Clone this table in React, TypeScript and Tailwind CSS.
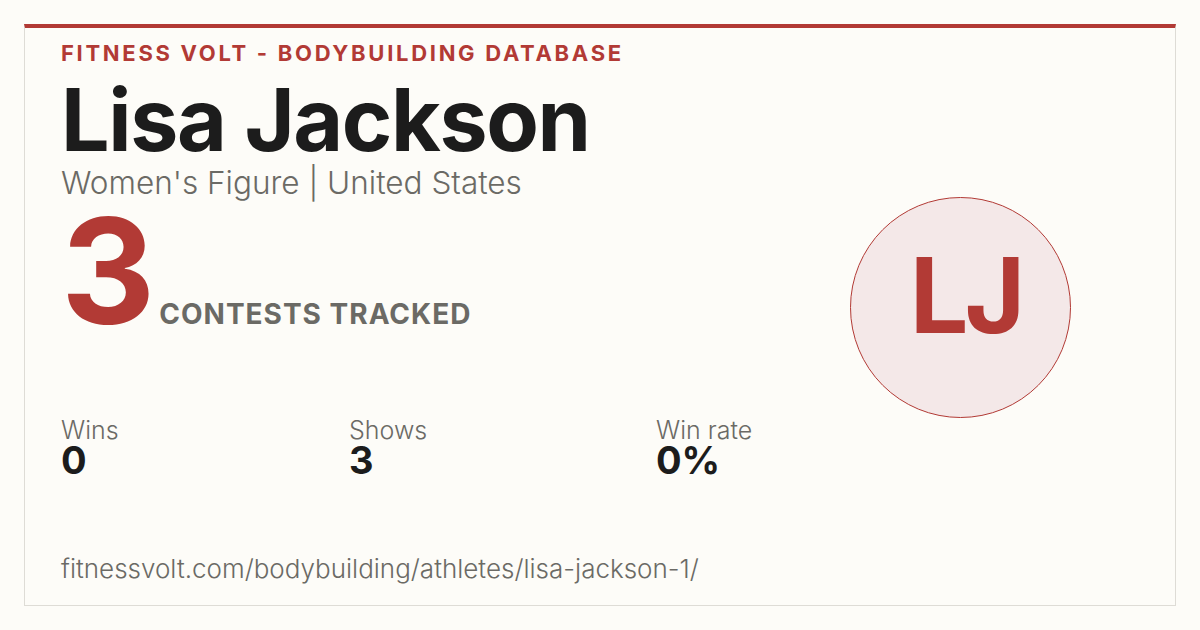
const stats = [
  { label: 'Wins', value: '0' },
  { label: 'Shows', value: '3' },
  { label: 'Win rate', value: '0%' },
];

export default function App() {
  return (
    <div
      className="h-[630px] w-[1200px] bg-[#fdfcf8] p-6"
      style={{ fontFamily: 'Inter, "Noto Sans", sans-serif' }}
    >
      <div className="flex h-[582px] border border-t-4 border-[#dedcd6] border-t-[#b23a35] bg-[#fdfcf8]">
        <div className="flex flex-1 flex-col pl-[36px] pt-[10px]">
          <div className="text-[22px] font-bold leading-[30px] tracking-[2.7px] text-[#b23a35]">
            FITNESS VOLT - BODYBUILDING DATABASE
          </div>
          <div className="mt-[8px] text-[86px] font-bold leading-[88px] tracking-[-1.4px] text-[#1c1c1c]">
            Lisa Jackson
          </div>
          <div className="text-[31.5px] font-light leading-[38px] text-[#6b6a65]">
            Women's Figure | United States
          </div>
          <div className="mt-[9px] flex items-baseline gap-[6px]">
            <div className="text-[146px] font-bold leading-[120px] tracking-[-2px] text-[#b23a35]">3</div>
            <div className="text-[28px] font-bold leading-[34px] tracking-[1px] text-[#6b6a65]">
              CONTESTS TRACKED
            </div>
          </div>
          <div className="mt-[85px] grid grid-cols-[288px_307px_auto]">
            {stats.map((s) => (
              <div key={s.label} className="flex flex-col">
                <span className="text-[25px] font-light leading-[28px] text-[#6b6a65]">{s.label}</span>
                <span className="text-[38px] font-bold leading-[33px] text-[#1c1c1c]">{s.value}</span>
              </div>
            ))}
          </div>
          <div className="mt-auto mb-[20px] text-[26px] font-light leading-[32px] text-[#6b6a65]">
            fitnessvolt.com/bodybuilding/athletes/lisa-jackson-1/
          </div>
        </div>
        <div className="flex w-[325px] items-start justify-start pt-[169px]">
          <div className="flex h-[221px] w-[221px] items-center justify-center rounded-full border-[1.5px] border-[#b23a35] bg-[#f4e8e8]">
            <span className="-mt-[26px] ml-[10px] text-[104px] font-bold leading-none tracking-[-4px] text-[#b23a35]">LJ</span>
          </div>
        </div>
      </div>
    </div>
  );
}
